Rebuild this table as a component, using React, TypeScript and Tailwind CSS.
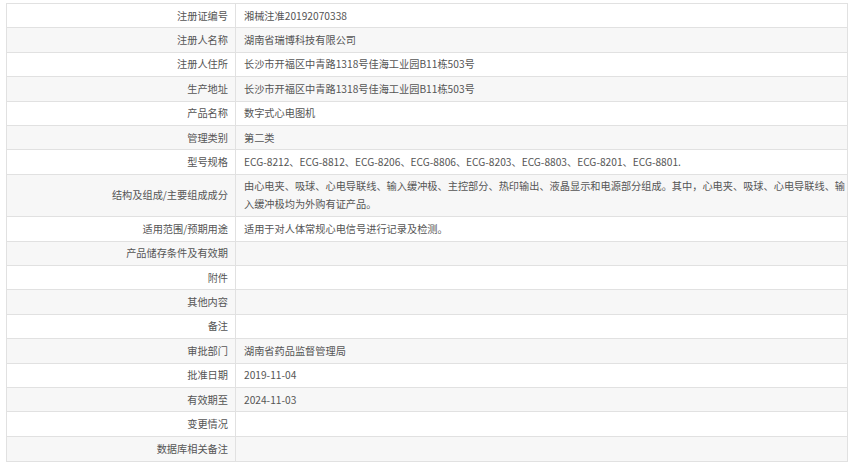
import type { ReactNode } from 'react';

const rows: [string, ReactNode, boolean?][] = [
  ['注册证编号', '湘械注准20192070338'],
  ['注册人名称', '湖南省瑞博科技有限公司'],
  ['注册人住所', '长沙市开福区中青路1318号佳海工业园B11栋503号'],
  ['生产地址', '长沙市开福区中青路1318号佳海工业园B11栋503号'],
  ['产品名称', '数字式心电图机'],
  ['管理类别', '第二类'],
  ['型号规格', 'ECG-8212、ECG-8812、ECG-8206、ECG-8806、ECG-8203、ECG-8803、ECG-8201、ECG-8801.'],
  [
    '结构及组成/主要组成成分',
    <>
      由心电夹、吸球、心电导联线、输入缓冲极、主控部分、热印输出、液晶显示和电源部分组成。其中，心电夹、吸球、心电导联线、输
      <br />
      入缓冲极均为外购有证产品。
    </>,
    true,
  ],
  ['适用范围/预期用途', '适用于对人体常规心电信号进行记录及检测。'],
  ['产品储存条件及有效期', ''],
  ['附件', ''],
  ['其他内容', ''],
  ['备注', ''],
  ['审批部门', '湖南省药品监督管理局'],
  ['批准日期', '2019-11-04'],
  ['有效期至', '2024-11-03'],
  ['变更情况', ''],
  ['数据库相关备注', ''],
];

export default function App() {
  return (
    <div
      className="min-h-screen bg-white pt-[3px] pl-[6px] text-[#555] text-[10.2px] leading-[18px]"
      style={{ fontFamily: '"Noto Sans CJK SC", "Liberation Sans", sans-serif' }}
    >
      <div className="w-[842px] border border-[#e1e1e1]">
        {rows.map(([label, value, tall], i) => (
          <div
            key={label}
            className={`flex ${i % 2 ? 'bg-[#f7f7f7]' : 'bg-white'} ${
              i < rows.length - 1 ? 'border-b border-[#e1e1e1]' : ''
            } ${tall ? 'h-[42.5px]' : 'h-[24.4px]'}`}
          >
            <div className="w-[229px] shrink-0 flex items-center justify-end pr-[7px] border-r border-[#e1e1e1]">
              {label}
            </div>
            <div className="flex-1 flex items-center pl-[8px] pr-[4px] whitespace-nowrap">
              <div>{value}</div>
            </div>
          </div>
        ))}
      </div>
    </div>
  );
}
